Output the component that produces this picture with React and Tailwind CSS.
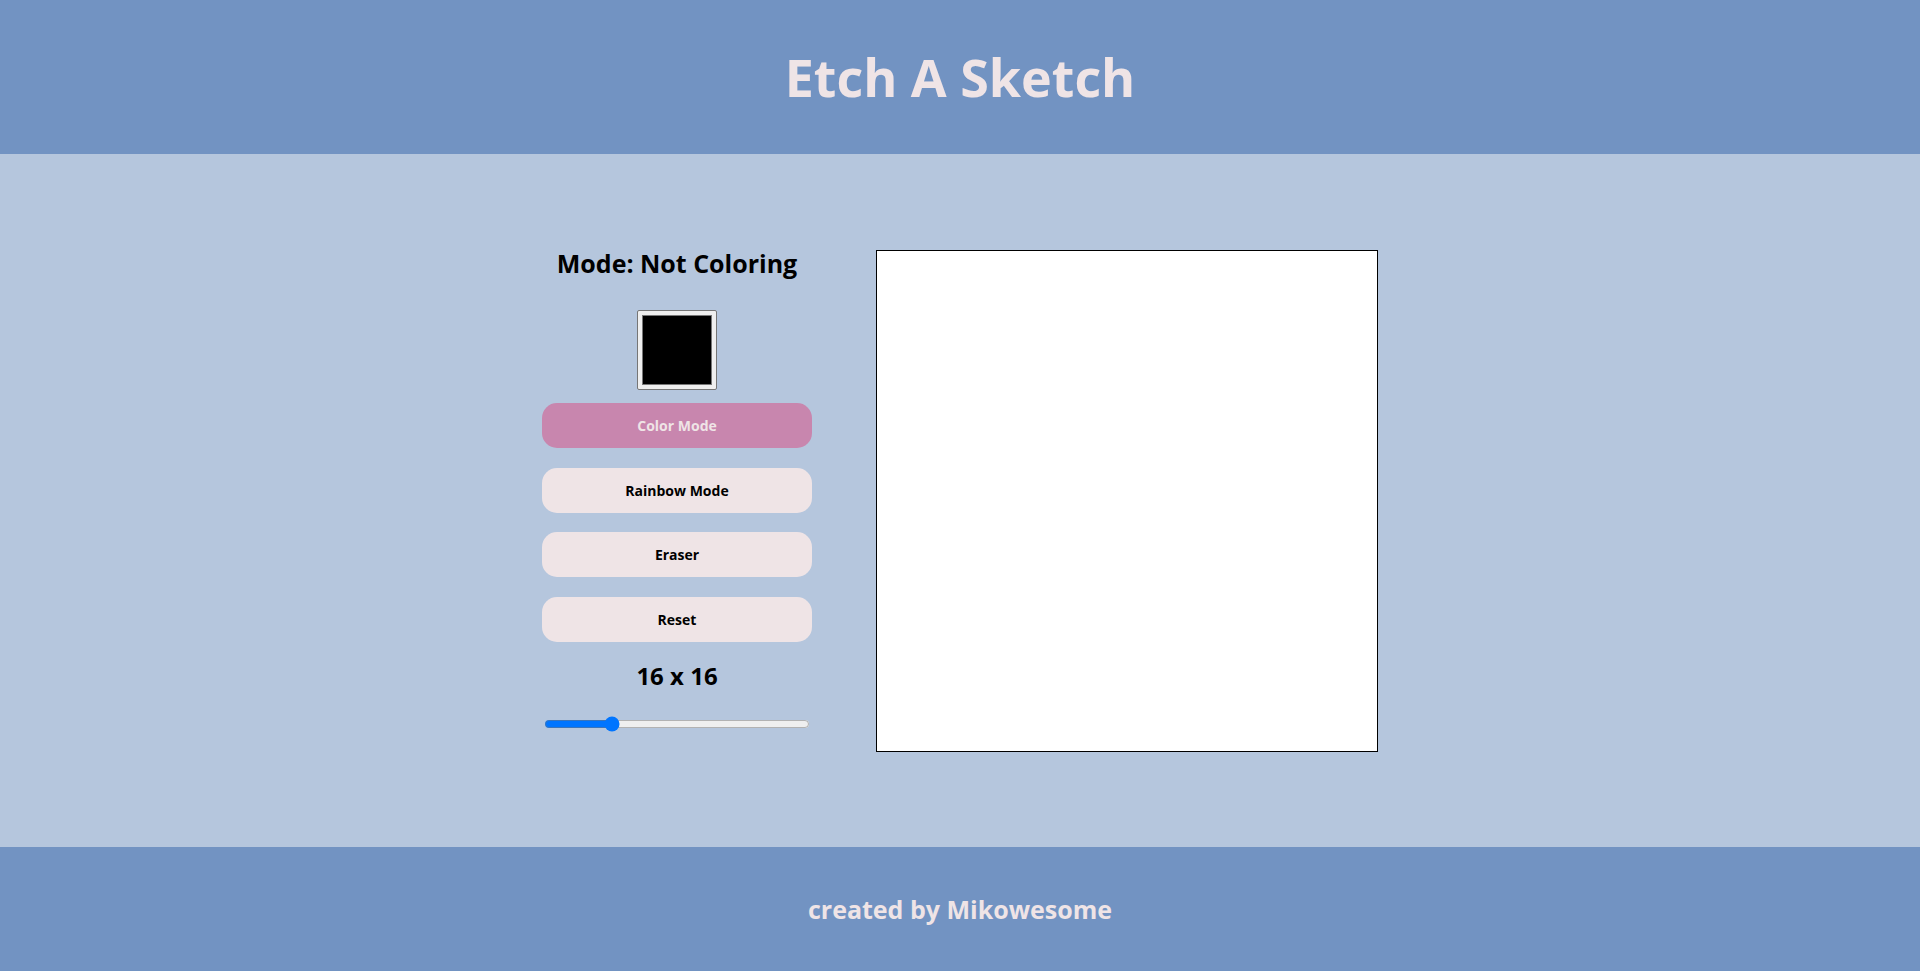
import React, { useState } from 'react'

const font = { fontFamily: '"Open Sans", "Liberation Sans", sans-serif' }

function ModeButton({ label, active, onClick }) {
  return (
    <button
      onClick={onClick}
      className={`w-[270px] h-[45px] rounded-[15px] text-[14px] font-bold ${active ? 'bg-[#c886ae] text-[#efe4e6]' : 'bg-[#efe4e6] text-black'}`}
    >
      {label}
    </button>
  )
}

export default function App() {
  const [mode, setMode] = useState('color')
  const [size, setSize] = useState(16)

  return (
    <div className="w-full min-h-[971px] flex flex-col bg-[#b5c6dd]" style={font}>
      {/* Header */}
      <header className="h-[154px] bg-[#7293c2] flex items-center justify-center">
        <h1 className="text-[52px] font-bold text-[#efe4e6] leading-none">Etch A Sketch</h1>
      </header>

      {/* Main */}
      <main className="h-[693px] flex items-start justify-center gap-16 pt-[96px]">
        <div className="w-[270px] flex flex-col items-center">
          <h2 className="text-[25px] font-bold leading-[26px] text-black">Mode: Not Coloring</h2>

          <div className="mt-[34px] w-20 h-20 border border-[#767676] bg-[#efefef] rounded-[2px] p-[4px]">
            <div className="w-full h-full bg-black border border-[#777]"></div>
          </div>

          <div className="mt-[13px] flex flex-col gap-[19.5px]">
            <ModeButton label="Color Mode" active={mode === 'color'} onClick={() => setMode('color')} />
            <ModeButton label="Rainbow Mode" active={mode === 'rainbow'} onClick={() => setMode('rainbow')} />
            <ModeButton label="Eraser" active={mode === 'eraser'} onClick={() => setMode('eraser')} />
            <ModeButton label="Reset" active={false} onClick={() => setMode('color')} />
          </div>

          <div className="mt-[18px] text-[24px] font-bold leading-[32px] text-black">
            {size} x {size}
          </div>

          <input
            type="range"
            min="1"
            max="64"
            value={size}
            onChange={(e) => setSize(Number(e.target.value))}
            className="mt-[24px] w-[266px]"
          />
        </div>

        {/* Sketch board */}
        <div className="w-[502px] h-[502px] bg-white border border-black"></div>
      </main>

      {/* Footer */}
      <footer className="h-[124px] bg-[#7293c2] flex items-center justify-center">
        <p className="text-[25px] font-bold text-[#efe4e6] leading-none">created by Mikowesome</p>
      </footer>
    </div>
  )
}
